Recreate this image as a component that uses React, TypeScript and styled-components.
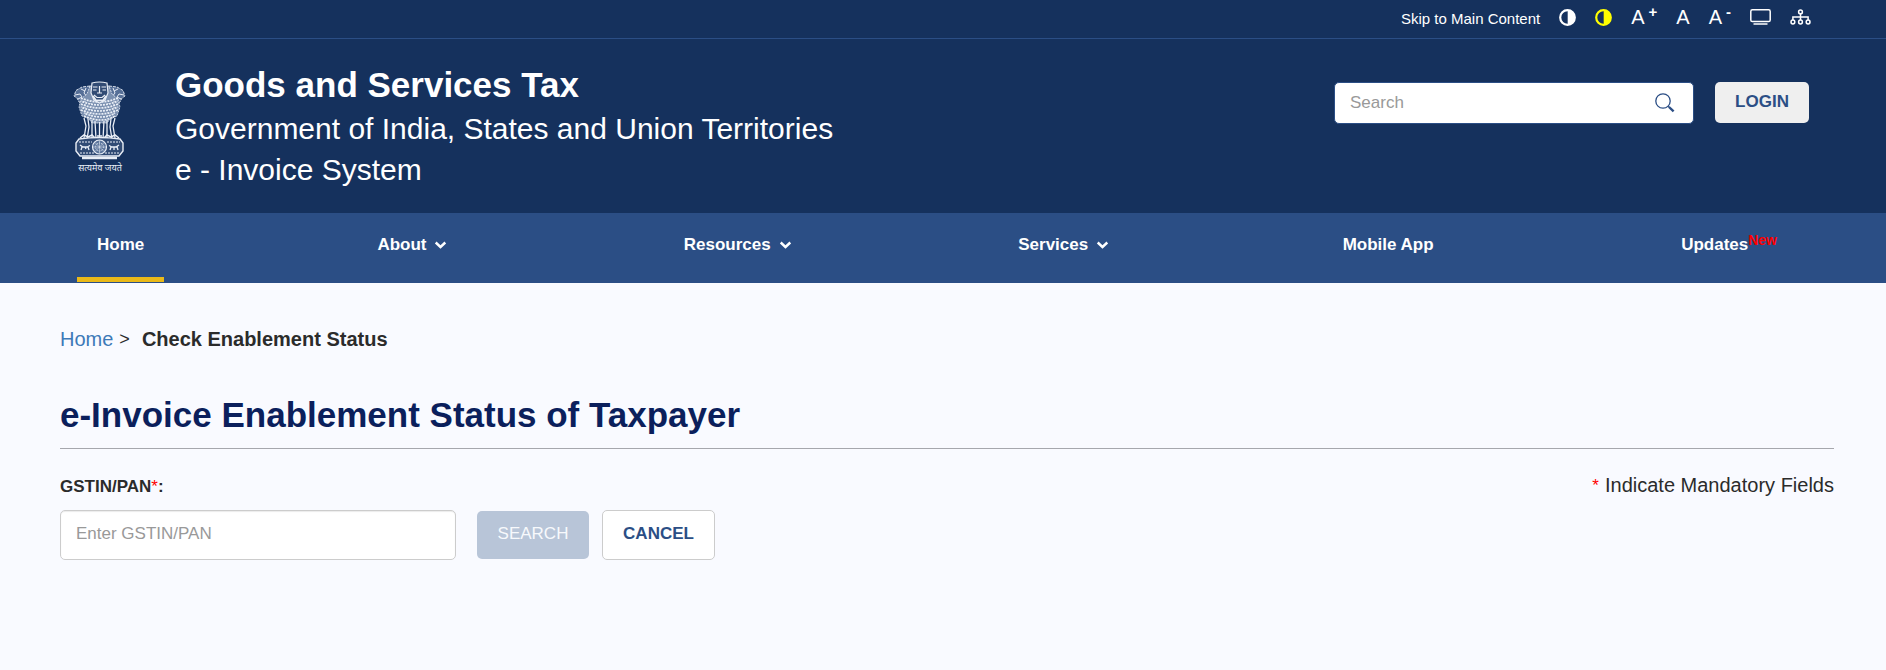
import React from 'react';
import styled, { createGlobalStyle } from 'styled-components';

const colors = {
  navy: '#15315d',
  blue: '#2b4e85',
  page: '#f9faff',
  ink: '#2b2b2b',
  title: '#0b1f5c',
  gold: '#eab919',
  red: '#ff0000',
};

const GlobalStyle = createGlobalStyle`
  *, *::before, *::after { box-sizing: border-box; }
  body {
    margin: 0;
    background: ${colors.page};
    color: ${colors.ink};
    font-family: "Liberation Sans", Arial, sans-serif;
    font-size: 17px;
    line-height: 24px;
  }
  button, input { font: inherit; }
`;

const TopBar = styled.div`
  display: flex;
  justify-content: flex-end;
  align-items: center;
  gap: 19px;
  height: 39px;
  padding: 0 75px 4px;
  background: ${colors.navy};
  border-bottom: 1px solid ${colors.blue};
`;

const SkipLink = styled.a`
  color: #fff;
  font-size: 15px;
  text-decoration: none;
  padding-top: 3px;
`;

const ToolButton = styled.button<{ $color?: string }>`
  display: flex;
  padding: 0;
  border: 0;
  background: none;
  color: ${(p) => p.$color ?? '#fff'};
  font-size: 20px;
  cursor: pointer;
`;

const SizeMark = styled.span`
  margin-left: 4px;
  font-size: 15px;
  font-weight: bold;
  line-height: 14px;
`;

const Header = styled.header`
  display: flex;
  align-items: center;
  gap: 48px;
  padding: 24px 77px 23px 73px;
  background: ${colors.navy};
  color: #fff;
`;

const Brand = styled.div`
  flex: 1;
`;

const BrandTitle = styled.div`
  padding-bottom: 1px;
  font-size: 35px;
  font-weight: bold;
  line-height: 44px;
`;

const BrandLine = styled.div`
  font-size: 30px;
  line-height: 41px;
`;

const HeaderActions = styled.div`
  display: flex;
  align-self: flex-start;
  gap: 21px;
  padding-top: 19px;
`;

const SiteSearch = styled.form`
  display: flex;
  align-items: center;
  width: 360px;
  height: 42px;
  padding: 0 18px 0 15px;
  border: 1px solid ${colors.blue};
  border-radius: 5px;
  background: #fff;
`;

const SiteSearchInput = styled.input`
  flex: 1;
  min-width: 0;
  padding: 0;
  border: 0;
  outline: 0;
  background: none;
  &::placeholder { color: #999; }
`;

const IconButton = styled.button`
  display: flex;
  padding: 0;
  border: 0;
  background: none;
  color: ${colors.blue};
  cursor: pointer;
`;

const LoginButton = styled.button`
  width: 94px;
  height: 41px;
  padding: 0 0 2px;
  border: 0;
  border-radius: 5px;
  background: #efefef;
  color: ${colors.blue};
  font-weight: bold;
  cursor: pointer;
`;

const Nav = styled.nav`
  padding: 0 77px 1px;
  background: ${colors.blue};
`;

const NavList = styled.ul`
  display: grid;
  grid-template-columns: 280fr 306fr 334fr 324fr 338fr auto;
  justify-items: start;
  margin: 0;
  padding: 0 12px 0 0;
  list-style: none;
`;

const NavLink = styled.a<{ $active?: boolean }>`
  display: flex;
  align-items: center;
  padding: 20px;
  border-bottom: 5px solid ${(p) => (p.$active ? colors.gold : 'transparent')};
  color: #fff;
  font-weight: bold;
  text-decoration: none;
  white-space: nowrap;
  svg { margin-left: 8px; }
`;

const NewTag = styled.span`
  align-self: flex-start;
  color: ${colors.red};
  font-size: 14px;
  line-height: 14px;
`;

const Main = styled.main`
  padding: 42px 52px 60px 60px;
`;

const Breadcrumb = styled.nav`
  display: flex;
  gap: 6px;
  margin-bottom: 41px;
  font-size: 20px;
  line-height: 28px;
  a { color: #3d79b8; text-decoration: none; }
  strong { margin-left: 6px; }
`;

const Separator = styled.span`
  font-size: 18px;
`;

const PageTitle = styled.h1`
  margin: 0 0 24px;
  padding-bottom: 12px;
  border-bottom: 1px solid #a6a7ad;
  color: ${colors.title};
  font-size: 35px;
  line-height: 42px;
`;

const FieldHeading = styled.div`
  display: flex;
  justify-content: space-between;
  align-items: baseline;
  margin-bottom: 11px;
`;

const Label = styled.label`
  font-weight: bold;
`;

const Required = styled.span`
  color: ${colors.red};
  font-weight: normal;
`;

const MandatoryNote = styled.div`
  font-size: 20px;
  ${Required} {
    margin-right: 6px;
    font-size: 17px;
    vertical-align: 1px;
  }
`;

const FieldRow = styled.div`
  display: flex;
  align-items: center;
`;

const TextInput = styled.input`
  width: 396px;
  height: 50px;
  margin-right: 21px;
  padding: 0 15px 2px;
  border: 1px solid #ccc;
  border-radius: 5px;
  background: #fff;
  box-shadow: inset 0 1px 1px rgba(0, 0, 0, 0.08);
  &::placeholder { color: #999; }
`;

const FormButton = styled.button<{ $primary?: boolean }>`
  width: ${(p) => (p.$primary ? 112 : 113)}px;
  height: ${(p) => (p.$primary ? 48 : 50)}px;
  margin-right: 13px;
  padding: 0 0 2px;
  border: ${(p) => (p.$primary ? '0' : '1px solid #ccc')};
  border-radius: 5px;
  background: ${(p) => (p.$primary ? '#b8c5d8' : '#fff')};
  color: ${(p) => (p.$primary ? '#f7f9fc' : colors.blue)};
  font-weight: ${(p) => (p.$primary ? 'normal' : 'bold')};
`;

const ContrastIcon = () => (
  <svg width="17" height="17" viewBox="0 0 17 17" aria-hidden="true">
    <circle cx="8.5" cy="8.5" r="7.3" fill="none" stroke="currentColor" strokeWidth="2.2" />
    <path d="M8.7 1.5a7 7 0 0 1 0 14z" fill="currentColor" />
  </svg>
);

const ScreenIcon = () => (
  <svg width="21" height="16" viewBox="0 0 21 16" fill="none" stroke="currentColor" strokeWidth="1.5" aria-hidden="true">
    <rect x="0.8" y="0.8" width="19.4" height="11.8" rx="1.6" />
    <path d="M3.5 15h14" />
  </svg>
);

const SitemapIcon = () => (
  <svg width="21" height="16" viewBox="0 0 21 16" fill="none" stroke="currentColor" strokeWidth="1.5" aria-hidden="true">
    <circle cx="10.5" cy="2.9" r="1.9" />
    <circle cx="2.9" cy="13" r="1.9" />
    <circle cx="10.5" cy="13" r="1.9" />
    <circle cx="18.1" cy="13" r="1.9" />
    <path d="M10.5 5v6M2.9 11V8h15.2v3" />
  </svg>
);

const SearchIcon = () => (
  <svg width="20" height="20" viewBox="0 0 20 20" fill="none" stroke="currentColor" aria-hidden="true">
    <circle cx="8" cy="8" r="7.2" strokeWidth="1.3" />
    <path d="M13.2 13.2l1.3 1.3" strokeWidth="1.3" />
    <path d="M14 14l4.6 4.4" strokeWidth="2.4" />
  </svg>
);

const ChevronIcon = () => (
  <svg width="13" height="8" viewBox="0 0 13 8" fill="none" stroke="currentColor" strokeWidth="2.4" aria-hidden="true">
    <path d="M1.700 1.500L6.500 6l4.800-4.500" />
  </svg>
);

const EmblemText = styled.text`
  font-family: "Noto Sans", "Noto Sans Devanagari", sans-serif;
  font-size: 9px;
`;

const maneRows = [17, 20, 23, 26, 29, 32, 35];

const Emblem = () => (
  <svg width="54" height="92" viewBox="0 0 54 92" fill="none" stroke="#e9eef6" strokeWidth="1" role="img" aria-label="State Emblem of India">
    {/* side lions */}
    <path d="M17 5L9 6 3 9.500 1 15l3 2 2 4 5 2 6-5zM36 5l8 1 6 3.500 2 5.500-3 2-2 4-5 2-6-5z" fill="#566f97" strokeWidth=".9" strokeDasharray="3 1" />
    <path d="M2 14l5-1 2 3-4 2M51 14l-5-1-2 3 4 2M8 8l4 2M45 8l-4 2M13 7l-2 5 4 5M40 7l2 5-4 5" />
    {/* mane of the front lion */}
    <path d="M17 5l-3 8-6 5-2 8 3 9 7 3 3 4h15l3-4 7-3 3-9-2-8-6-5-3-8z" fill="#7b90b0" strokeWidth=".8" strokeDasharray="2 1" />
    {maneRows.map((y, i) => (
      <path
        key={y}
        d={`M${8 + (i > 4 ? 3 : 0)} ${y}q18.500 8 ${37 - (i > 4 ? 6 : 0)} 0`}
        strokeDasharray="2 1"
        strokeDashoffset={i % 2 ? 1.5 : 0}
        strokeWidth="1.700"
      />
    ))}
    <path d="M12 20v14M18 19v19M35 19v19M41 20v14" strokeDasharray="1 2" strokeWidth=".8" />
    {/* face of the front lion */}
    <path d="M19 2q7.500-2 15 0l1 10-3 7-5.500 3-5.500-3-3-7z" fill="#314b74" strokeWidth="1.200" />
    <path d="M20 6h4.500M28.500 6H33M20 9h3.500M29.500 9H33" strokeWidth="1.200" />
    <path d="M26.500 5v7M24 12h5M21 14l3 2.500h5l3-2.500" strokeWidth="1.200" />
    <path d="M20 15l3 4.500h7l3-4.500" strokeWidth="1.800" />
    {/* legs */}
    <path d="M11 37l2 8-2 12M15 38l1 8-2 12M19 39v19M22 40l1 18M26.500 41v17M31 40l-1 18M34 39v19M38 38l-1 8 2 12M42 37l-2 8 2 12" strokeWidth="1.300" />
    <path d="M7 57l4-3 4 2 4-2 3 3M31 57l3-3 4 2 4-2 4 3M24 55h5" strokeWidth="1.500" />
    {/* abacus with the wheel */}
    <path d="M6 58q20.500-3 41 0l3 4v8l-4 5H7l-4-5v-8z" fill="#314b74" strokeWidth="1.400" />
    <path d="M6 61h13M34 61h13M7 72h14M32 72h14" strokeDasharray="2 1" />
    <path d="M7 64l3 2h4l3-1.500M9 66l-1 3M15 66l1 3M12 66l1 2M36 64.500l3 1.500h4l3-2M38 66l-1 3M44 66l1 3M41 66v3" strokeWidth="1.300" />
    <circle cx="26.500" cy="66" r="7" fill="#5d769c" strokeWidth="1.200" />
    <circle cx="26.500" cy="66" r="4" strokeDasharray="1 1" strokeWidth=".9" />
    <path d="M20 66h13M26.500 59.500v13M22 61.500l9 9M31 61.500l-9 9" strokeWidth=".5" />
    <path d="M9 77h35" strokeWidth="2.400" />
    <EmblemText x="27" y="90" textAnchor="middle" fill="#e9eef6" stroke="none">सत्यमेव जयते</EmblemText>
  </svg>
);

const navItems = [
  { label: 'Home', active: true },
  { label: 'About', menu: true },
  { label: 'Resources', menu: true },
  { label: 'Services', menu: true },
  { label: 'Mobile App' },
  { label: 'Updates', isNew: true },
];

export default function App() {
  return (
    <>
      <GlobalStyle />
      <TopBar>
        <SkipLink href="#main">Skip to Main Content</SkipLink>
        <ToolButton aria-label="Standard contrast"><ContrastIcon /></ToolButton>
        <ToolButton $color="#ffff00" aria-label="High contrast"><ContrastIcon /></ToolButton>
        <ToolButton aria-label="Increase text size">A<SizeMark>+</SizeMark></ToolButton>
        <ToolButton aria-label="Normal text size">A</ToolButton>
        <ToolButton aria-label="Decrease text size">A<SizeMark>-</SizeMark></ToolButton>
        <ToolButton aria-label="Screen reader access"><ScreenIcon /></ToolButton>
        <ToolButton aria-label="Sitemap"><SitemapIcon /></ToolButton>
      </TopBar>

      <Header>
        <Emblem />
        <Brand>
          <BrandTitle>Goods and Services Tax</BrandTitle>
          <BrandLine>Government of India, States and Union Territories</BrandLine>
          <BrandLine>e - Invoice System</BrandLine>
        </Brand>
        <HeaderActions>
          <SiteSearch role="search" onSubmit={(e) => e.preventDefault()}>
            <SiteSearchInput type="text" placeholder="Search" aria-label="Search" />
            <IconButton type="submit" aria-label="Search"><SearchIcon /></IconButton>
          </SiteSearch>
          <LoginButton type="button">LOGIN</LoginButton>
        </HeaderActions>
      </Header>

      <Nav aria-label="Main">
        <NavList>
          {navItems.map((item) => (
            <li key={item.label}>
              <NavLink href="#" $active={item.active}>
                {item.label}
                {item.menu && <ChevronIcon />}
                {item.isNew && <NewTag>New</NewTag>}
              </NavLink>
            </li>
          ))}
        </NavList>
      </Nav>

      <Main id="main">
        <Breadcrumb aria-label="Breadcrumb">
          <a href="#">Home</a>
          <Separator>&gt;</Separator>
          <strong>Check Enablement Status</strong>
        </Breadcrumb>
        <PageTitle>e-Invoice Enablement Status of Taxpayer</PageTitle>
        <form onSubmit={(e) => e.preventDefault()}>
          <FieldHeading>
            <Label htmlFor="gstin">GSTIN/PAN<Required>*</Required>:</Label>
            <MandatoryNote><Required>*</Required>Indicate Mandatory Fields</MandatoryNote>
          </FieldHeading>
          <FieldRow>
            <TextInput id="gstin" type="text" placeholder="Enter GSTIN/PAN" />
            <FormButton type="submit" $primary disabled>SEARCH</FormButton>
            <FormButton type="button">CANCEL</FormButton>
          </FieldRow>
        </form>
      </Main>
    </>
  );
}
